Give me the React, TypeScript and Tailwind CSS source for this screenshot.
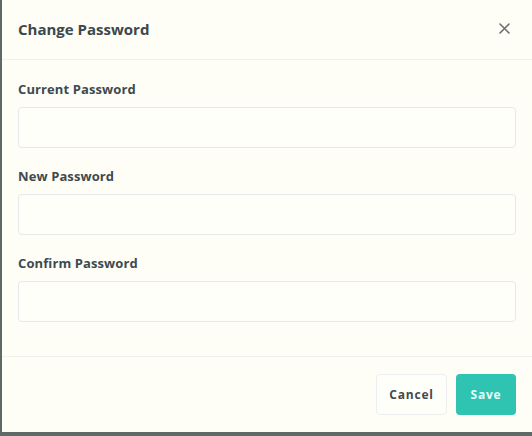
import React from "react";

function Field({ label }: { label: string }) {
  return (
    <div className="flex flex-col">
      <label className="text-[13px] font-bold text-[#3f4a4f] leading-[18px] mb-[9px] tracking-[0.1px]">{label}</label>
      <input
        type="password"
        className="h-[41px] w-full rounded-[4px] border border-[#e7e8ec] bg-[#fffffa] outline-none"
      />
    </div>
  );
}

export default function App() {
  return (
    <div className="w-[532px] h-[436px] bg-[#5f6a66] overflow-hidden" style={{ fontFamily: "'Open Sans', 'Noto Sans', sans-serif" }}>
      <div className="h-[432px] ml-[2px] bg-[#fefef7] flex flex-col">
        <div className="h-[60px] flex items-center justify-between pl-[16px] pr-[22px] border-b border-[#eff1ee]">
          <h2 className="text-[15px] font-bold text-[#3c474c] leading-[20px] -mt-[2px]">Change Password</h2>
          <svg width="11" height="11" viewBox="0 0 11 11" className="text-[#6b6f70] -mt-[2px]">
            <path d="M1 1L10 10M10 1L1 10" stroke="currentColor" strokeWidth="1.6" strokeLinecap="round" />
          </svg>
        </div>
        <div className="flex flex-col gap-[19px] pl-[16px] pr-[16px] pt-[20px] pb-[34px] border-b border-[#eff1ee]">
          <Field label="Current Password" />
          <Field label="New Password" />
          <Field label="Confirm Password" />
        </div>
        <div className="flex justify-end gap-[9px] pr-[16px] pt-[17px]">
          <button className="h-[41px] w-[71px] rounded-[4px] border border-[#eceef0] bg-[#fffffa] text-[12px] font-bold tracking-[0.8px] text-[#3f4a4f]">Cancel</button>
          <button className="h-[41px] w-[60px] rounded-[4px] bg-[#2ec4b1] text-[12px] font-bold tracking-[0.8px] text-[#eafaf6]">Save</button>
        </div>
      </div>
    </div>
  );
}
